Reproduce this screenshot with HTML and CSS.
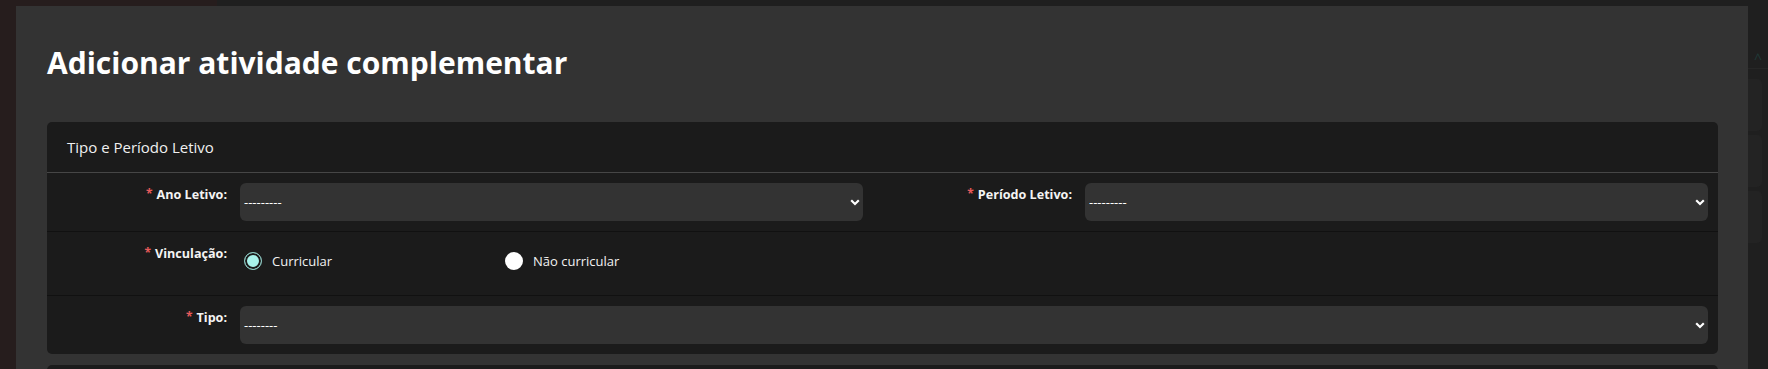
FILE: index.html
```html
<!DOCTYPE html>
<html lang="pt-BR">
<head>
  <meta charset="UTF-8" />
  <meta name="viewport" content="width=device-width, initial-scale=1" />
  <title>Adicionar atividade complementar</title>
  <link rel="stylesheet" href="styles.css">
</head>
<body>

<div class="page">
  <div class="modal">
    <h1 class="modal-title">Adicionar atividade complementar</h1>

    <div class="card">
      <div class="card-header">Tipo e Período Letivo</div>

      <div class="form-row">
        <label class="field-label" for="anoLetivo"><span class="req">*</span>Ano Letivo:</label>
        <div class="select-wrap">
          <select id="anoLetivo"><option>---------</option></select>
          <svg class="chevron" width="10" height="7" viewBox="0 0 10 7"><path d="M1.2 1.3 L5 5 L8.8 1.3" fill="none" stroke="#fff" stroke-width="2.2"/></svg>
        </div>
        <label class="field-label" for="periodoLetivo"><span class="req">*</span>Período Letivo:</label>
        <div class="select-wrap">
          <select id="periodoLetivo"><option>---------</option></select>
          <svg class="chevron" width="10" height="7" viewBox="0 0 10 7"><path d="M1.2 1.3 L5 5 L8.8 1.3" fill="none" stroke="#fff" stroke-width="2.2"/></svg>
        </div>
      </div>

      <div class="form-row">
        <label class="field-label"><span class="req">*</span>Vinculação:</label>
        <div class="radio-group wide">
          <label class="radio-option"><input type="radio" name="vinculacao" checked> Curricular</label>
          <label class="radio-option"><input type="radio" name="vinculacao"> Não curricular</label>
        </div>
      </div>

      <div class="form-row">
        <label class="field-label" for="tipo"><span class="req">*</span>Tipo:</label>
        <div class="select-wrap wide">
          <select id="tipo"><option>--------</option></select>
          <svg class="chevron" width="10" height="7" viewBox="0 0 10 7"><path d="M1.2 1.3 L5 5 L8.8 1.3" fill="none" stroke="#fff" stroke-width="2.2"/></svg>
        </div>
      </div>
    </div>

    <div class="card card-next"></div>
  </div>

  <div class="side">
    <div class="side-arrow">^</div>
    <div class="side-box"></div>
    <div class="side-box"></div>
    <div class="side-box"></div>
  </div>
</div>

</body>
</html>
```

FILE: styles.css
```css
* { box-sizing: border-box; margin: 0; padding: 0; }

body {
  font-family: 'Open Sans', 'Noto Sans', sans-serif;
  background: linear-gradient(to right, #261d1d 217px, #1f1f1f 217px);
  color: #f2f2f2;
  overflow: hidden;
}

.page {
  display: flex;
  height: 369px;
  padding: 6px 0 0 16px;
  overflow: hidden;
}

.modal {
  width: 1732px;
  flex-shrink: 0;
  background: #333;
  padding: 39px 30px 0 31px;
}

.modal-title {
  font-size: 30px;
  font-weight: 700;
  line-height: 36px;
  color: #fff;
  margin-bottom: 41px;
}

.card {
  background: #1b1b1b;
  border-radius: 5px;
}

.card-header {
  height: 51px;
  display: flex;
  align-items: center;
  padding: 0 20px 1px;
  font-size: 15px;
  color: #f0f0f0;
  border-bottom: 1px solid #464646;
}

.form-row {
  display: grid;
  grid-template-columns: 180px 1fr 196px 1fr;
  column-gap: 13px;
  padding: 10px 10px 10px 0;
  border-bottom: 1px solid #111;
}

.form-row:last-child { border-bottom: none; }

.field-label {
  text-align: right;
  font-size: 12.6px;
  font-weight: 700;
  line-height: 24px;
  color: #f4f4f4;
}

.req {
  color: #e85a5a;
  font-size: 12px;
  margin-right: 4px;
  position: relative;
  top: -1px;
}

.wide { grid-column: 2 / -1; }

.select-wrap { position: relative; }

select {
  appearance: none;
  -webkit-appearance: none;
  width: 100%;
  height: 38px;
  border: none;
  border-radius: 6px;
  background: #333;
  color: #fff;
  font-family: 'Open Sans', 'Noto Sans', sans-serif;
  font-size: 13px;
  padding: 0 20px 0 4px;
  outline: none;
}

.chevron {
  position: absolute;
  right: 3px;
  top: 16px;
  pointer-events: none;
}

.radio-group {
  display: grid;
  grid-template-columns: 261px 261px;
  align-items: center;
  height: 38px;
  margin-bottom: 5px;
  padding-left: 4px;
}

.radio-option {
  display: flex;
  align-items: center;
  gap: 10px;
  font-size: 13px;
  color: #f2f2f2;
}

.radio-option input {
  appearance: none;
  -webkit-appearance: none;
  width: 18px;
  height: 18px;
  border-radius: 50%;
  background: #fff;
  margin: 0;
}

.radio-option input:checked {
  background: #a8f3eb;
  border: 1.5px solid #8cc7c0;
  box-shadow: inset 0 0 0 2px #1b1b1b;
}

.card-next {
  margin-top: 11px;
  height: 40px;
  border-radius: 5px 5px 0 0;
}

.side {
  flex: 1;
  padding-top: 44px;
  background: #1f1f1f;
}

.side-arrow {
  color: #1f3a38;
  font-size: 14px;
  line-height: 18px;
  text-align: center;
  margin-bottom: 10px;
  border-bottom: 1px solid #262626;
}

.side-box {
  height: 52px;
  margin: 0 6px 4px 0;
  border-radius: 0 5px 5px 0;
  background: #232323;
}
```
